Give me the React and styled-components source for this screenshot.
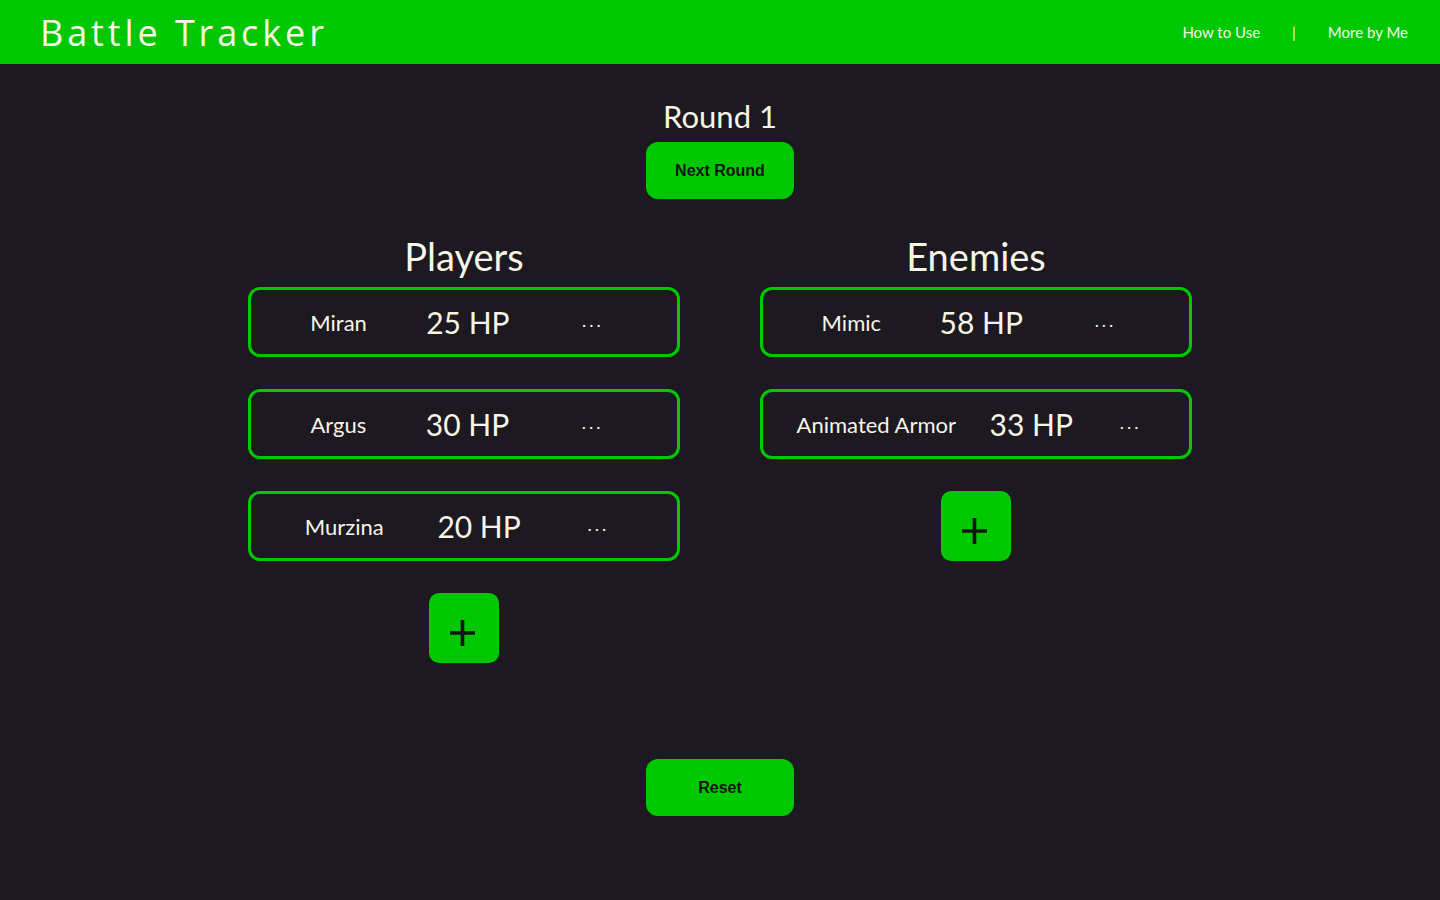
import React, { useState } from 'react'
import styled, { createGlobalStyle } from 'styled-components';

const GREEN = '#00c800';
const CREAM = '#f7f5e6';
const BG = '#1c1920';

const Global = createGlobalStyle`
   body {
      margin: 0;
      background: ${BG};
      font-family: Lato, "Open Sans", sans-serif;
      color: ${CREAM};
   }
`

const Header = styled.header`
   height: 64px;
   background: ${GREEN};
   display: flex;
   align-items: center;
   justify-content: space-between;
   padding: 0 32px 0 40px;
`

const Logo = styled.h1`
   margin: 0;
   font-family: "Open Sans", sans-serif;
   font-weight: 500;
   font-size: 36px;
   letter-spacing: 3.9px;
   color: ${CREAM};
`

const Nav = styled.nav`
   display: flex;
   align-items: center;
   gap: 32px;
   font-size: 15px;
   color: ${CREAM};
`

const Main = styled.main`
   display: flex;
   flex-direction: column;
   align-items: center;
   padding-top: 34px;
`

const RoundTitle = styled.h2`
   margin: 0 0 8px;
   font-weight: 400;
   font-size: 31px;
   line-height: 36px;
`

const GreenButton = styled.button`
   width: 148px;
   height: 57px;
   border: none;
   border-radius: 12px;
   background: ${GREEN};
   color: #141414;
   font-family: "Liberation Sans", Arial, sans-serif;
   font-weight: 700;
   font-size: 16px;
   cursor: pointer;
`

const Columns = styled.section`
   display: grid;
   grid-template-columns: 432px 432px;
   gap: 80px;
   margin-top: 34px;
   align-items: start;
`

const Column = styled.div`
   display: flex;
   flex-direction: column;
   align-items: center;
   gap: 32px;
`

const ColumnTitle = styled.h3`
   margin: 0 0 -24px;
   font-weight: 400;
   font-size: 38px;
   line-height: 46px;
`

const Card = styled.div`
   box-sizing: border-box;
   width: 432px;
   height: 70px;
   border: 3px solid ${GREEN};
   border-radius: 12px;
   display: flex;
   align-items: center;
   justify-content: space-evenly;
`

const Name = styled.span`
   font-size: 22px;
`

const Hp = styled.span`
   font-size: 30px;
`

const More = styled.span`
   font-size: 18px;
   letter-spacing: 3px;
   padding: 0 14px 5px 13px;
   cursor: pointer;
`

const AddButton = styled.button`
   width: 70px;
   height: 70px;
   border: none;
   border-radius: 10px;
   background: ${GREEN};
   display: flex;
   align-items: center;
   justify-content: center;
   padding: 10px 4px 0 0;
   cursor: pointer;
`

const ResetWrap = styled.div`
   margin-top: 96px;
`

const Combatant = ({ name, hp }) => (
   <Card>
      <Name>{name}</Name>
      <Hp>{hp} HP</Hp>
      <More>...</More>
   </Card>
)

const Plus = () => (
   <svg width="25" height="26" viewBox="0 0 25 26">
      <path d="M12.5 0v26M0 13h25" stroke="#141414" strokeWidth="3.6" />
   </svg>
)

const App = () => {
   const [round, setRound] = useState(1)
   const players = [
      { name: 'Miran', hp: 25 },
      { name: 'Argus', hp: 30 },
      { name: 'Murzina', hp: 20 },
   ]
   const enemies = [
      { name: 'Mimic', hp: 58 },
      { name: 'Animated Armor', hp: 33 },
   ]

   return (
      <>
         <Global />
         <Header>
            <Logo>Battle Tracker</Logo>
            <Nav>
               <span>How to Use</span>
               <span>|</span>
               <span>More by Me</span>
            </Nav>
         </Header>
         <Main>
            <RoundTitle>Round {round}</RoundTitle>
            <GreenButton onClick={() => setRound(round + 1)}>Next Round</GreenButton>
            <Columns>
               <Column>
                  <ColumnTitle>Players</ColumnTitle>
                  {players.map(p => <Combatant key={p.name} {...p} />)}
                  <AddButton><Plus /></AddButton>
               </Column>
               <Column>
                  <ColumnTitle>Enemies</ColumnTitle>
                  {enemies.map(e => <Combatant key={e.name} {...e} />)}
                  <AddButton><Plus /></AddButton>
               </Column>
            </Columns>
            <ResetWrap>
               <GreenButton onClick={() => setRound(1)}>Reset</GreenButton>
            </ResetWrap>
         </Main>
      </>
   )
}

export default App
